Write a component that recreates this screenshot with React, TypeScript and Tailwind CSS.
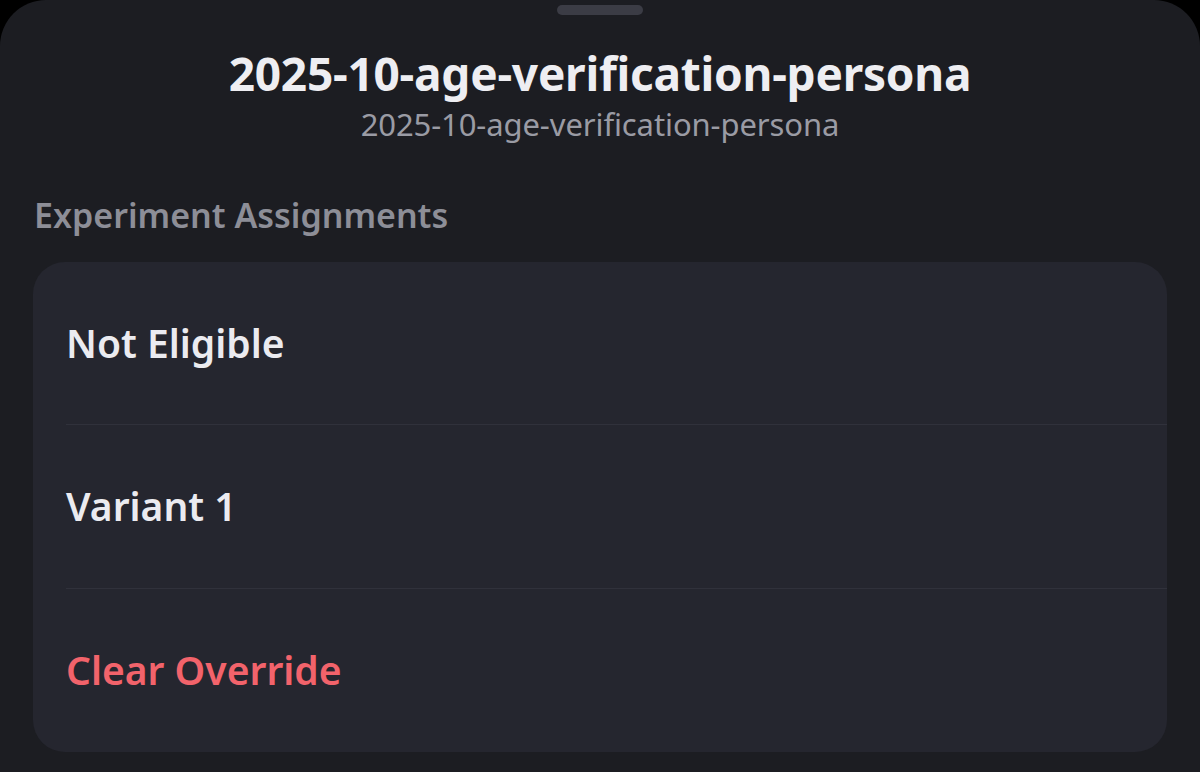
export default function App() {
  const font = { fontFamily: '"Noto Sans", "Open Sans", sans-serif' };
  return (
    <div className="w-[1200px] h-[772px] bg-black overflow-hidden" style={font}>
      <div className="h-full bg-[#1c1d22] rounded-t-[46px] flex flex-col">
        <div className="flex justify-center pt-[5px]">
          <div className="w-[86px] h-[10px] rounded-full bg-[#3b3c45]" />
        </div>
        <div className="flex flex-col items-center mt-[30px]">
          <div className="text-[46px] leading-[56px] font-bold text-[#eeeef2] tracking-[-0.25px]">
            2025-10-age-verification-persona
          </div>
          <div className="text-[31px] leading-[40px] text-[#9a9ba4] mt-[3px] tracking-[-0.1px]">
            2025-10-age-verification-persona
          </div>
        </div>
        <div className="mt-[51px] pl-[34px] text-[34px] leading-[40px] font-semibold text-[#8d8e97]">
          Experiment Assignments
        </div>
        <div className="mt-[27px] mx-[33px] rounded-[32px] bg-[#25262f] flex flex-col">
          <div className="h-[162px] flex items-center pl-[33px] text-[39px] font-semibold text-[#ebebf0]">
            Not Eligible
          </div>
          <div className="ml-[33px] h-px bg-[#30313b]" />
          <div className="h-[163px] flex items-center pl-[33px] text-[39px] font-semibold text-[#ebebf0]">
            Variant 1
          </div>
          <div className="ml-[33px] h-px bg-[#30313b]" />
          <div className="h-[163px] flex items-center pl-[33px] text-[39px] font-semibold text-[#f2636b]">
            Clear Override
          </div>
        </div>
      </div>
    </div>
  );
}
